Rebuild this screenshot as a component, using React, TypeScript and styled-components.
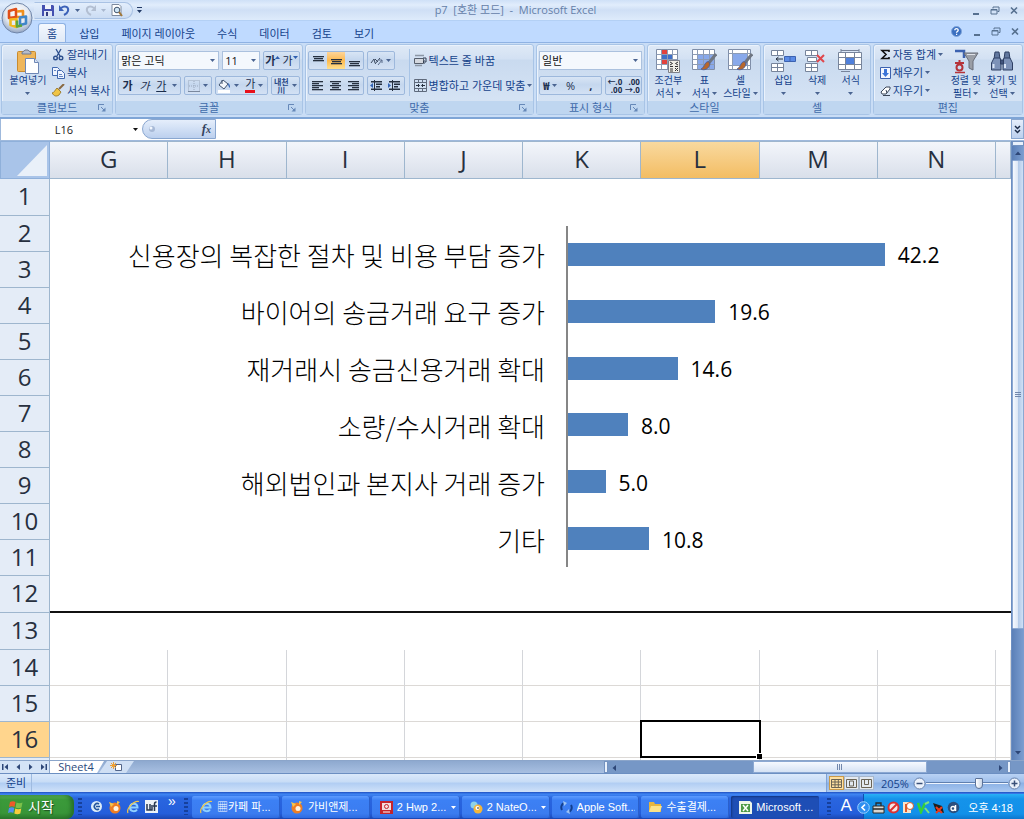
import React from 'react';
import styled, { createGlobalStyle, css } from 'styled-components';

const ui = '"Open Sans", "Noto Sans CJK KR", sans-serif';

const GlobalStyle = createGlobalStyle`
  * { box-sizing: border-box; }
  body { margin: 0; background: #bfdbff; font-family: ${ui}; font-size: 11px; color: #15428b; }
  button, input, select { font: inherit; color: inherit; border: 0; padding: 0; margin: 0; background: none; border-radius: 0; outline: none; }
  svg { display: block; flex: none; }
`;

const Window = styled.div`
  display: flex;
  flex-direction: column;
  height: 100vh;
  min-height: 500px;
  overflow: hidden;
`;

/* ---------- title bar ---------- */

const Top = styled.header`
  position: relative;
  flex: none;
`;

const TitleBar = styled.div`
  display: flex;
  align-items: center;
  gap: 4px;
  height: 21px;
  padding: 0 6px 0 34px;
  border-bottom: 1px solid #b3d0f5;
  background: linear-gradient(#cfe0f7, #e1edfc 25%, #cfdff5 50%, #deebfb);
`;

const Orb = styled.button`
  position: absolute;
  left: 1px;
  top: 2px;
  width: 32px;
  height: 32px;
`;

const QuickBar = styled.div`
  display: flex;
  align-items: center;
  gap: 5px;
  width: 99px;
  height: 17px;
  padding-left: 7px;
  border: 1px solid #a9c2e4;
  border-left-color: transparent;
  border-radius: 0 9px 9px 0;
  background: linear-gradient(#e3eefc, #cbdcf3);
`;

const IconButton = styled.button`
  display: flex;
  align-items: center;
  justify-content: center;
`;

const Title = styled.h1`
  flex: 1;
  margin: 0;
  padding-right: 82px;
  font-size: 11px;
  line-height: 20px;
  font-weight: 400;
  text-align: center;
  white-space: pre;
  color: #6580a8;
`;

const WindowButtons = styled.div`
  display: flex;
  align-items: center;
  align-self: center;
  gap: 10px;
`;

/* ---------- ribbon ---------- */

const TabRow = styled.nav`
  display: flex;
  align-items: flex-end;
  gap: 4px;
  height: 21px;
  padding: 0 5px 0 38px;
  background: #bfdaff;
`;

const Tab = styled.button<{ $active?: boolean }>`
  height: 19px;
  padding: 0 8px;
  line-height: 17px;
  white-space: nowrap;
  border: 1px solid transparent;
  border-bottom: 0;
  ${p => p.$active && css`
    border-color: #8fb2e3;
    border-radius: 3px 3px 0 0;
    background: linear-gradient(#f4f8fe, #dfe9f6);
  `}
`;

const TabSpacer = styled.div`
  flex: 1;
`;

const Ribbon = styled.div`
  display: grid;
  grid-template-columns:
    minmax(0, 112fr) minmax(0, 187fr) minmax(0, 229fr) minmax(0, 109fr)
    minmax(0, 114fr) minmax(0, 107fr) minmax(0, 150fr);
  gap: 2px;
  height: 77px;
  padding: 1px 1px 2px;
  border-top: 1px solid #8fb2e3;
  border-bottom: 2px solid #7fa5d6;
  background: #c9ddf6;
`;

const GroupBox = styled.section`
  display: flex;
  flex-direction: column;
  border: 1px solid #a8c4e6;
  border-radius: 3px;
  box-shadow: inset 1px 1px 0 #eaf2fc;
  background: linear-gradient(#dfe9f6, #d3e1f3 20%, #c9daef 22%, #d9e6f6);
`;

const GroupBody = styled.div`
  display: flex;
  flex: 1;
  min-height: 0;
  padding: 0 2px;
`;

const GroupFoot = styled.div`
  display: grid;
  grid-template-columns: 14px 1fr 14px;
  align-items: center;
  height: 13px;
  line-height: 13px;
  text-align: center;
  color: #3e6aaa;
  background: #bfd6f0;
`;

const ToolRows = styled.div`
  display: flex;
  flex-direction: column;
  gap: 6px;
  padding-top: 6px;
  width: 100%;
`;

const AlignRows = styled(ToolRows)`
  flex: none;
  width: 97px;
  margin-right: 4px;
`;

const Gap = styled.div`
  width: 7px;
`;

const ToolRow = styled.div`
  display: flex;
  gap: 3px;
  height: 19px;
`;

const ButtonStrip = styled.div<{ $grow?: number }>`
  display: flex;
  align-items: stretch;
  flex: ${p => p.$grow ?? 1} 1 0;
  min-width: 0;
  border: 1px solid #9db8dc;
  border-radius: 2px;
  background: linear-gradient(#d8e5f5, #c5d7ee 45%, #d3e1f4);
`;

const Tool = styled.button<{ $on?: boolean; $look?: 'bold' | 'italic' | 'underline' }>`
  display: flex;
  flex: 1;
  align-items: center;
  justify-content: center;
  gap: 3px;
  min-width: 0;
  line-height: 15px;
  color: #1b2d4d;
  white-space: nowrap;
  ${p => p.$on && css`background: linear-gradient(#fdd59a, #fdb94f 50%, #ffe08e);`}
  ${p => p.$look === 'bold' && css`font-weight: 700;`}
  ${p => p.$look === 'italic' && css`font-style: italic;`}
  ${p => p.$look === 'underline' && css`text-decoration: underline;`}
`;

const CaretTool = styled(Tool)`
  flex: none;
  width: 10px;
`;

const SelectShell = styled.label<{ $grow?: number }>`
  display: grid;
  flex: ${p => p.$grow ?? 1} 1 0;
  min-width: 0;
  align-items: center;
  border: 1px solid #abc1de;
  background: #f4f8fd;

  select {
    grid-area: 1 / 1;
    appearance: none;
    width: 100%;
    height: 17px;
    padding-left: 2px;
    line-height: 17px;
    color: #111;
  }
  svg {
    grid-area: 1 / 1;
    justify-self: end;
    margin-right: 3px;
    pointer-events: none;
  }
`;

const SmallList = styled.div`
  display: flex;
  flex-direction: column;
  gap: 1px;
  padding-top: 1px;
`;

const EditList = styled(SmallList)`
  width: 72px;
  padding-left: 4px;
`;

const SmallButton = styled.button`
  display: flex;
  align-items: center;
  gap: 2px;
  height: 17px;
  line-height: 16px;
  white-space: nowrap;
`;

const WideList = styled.div`
  display: flex;
  flex-direction: column;
  gap: 8px;
  margin: 4px 0 5px;
  padding: 3px 0 0 4px;
  border-left: 1px solid #a8c4e6;
`;

const BigButton = styled.button`
  display: flex;
  flex: 1;
  flex-direction: column;
  align-items: center;
  min-width: 0;
  padding-top: 3px;
  font-size: 10px;
  line-height: 13px;
  white-space: nowrap;
`;

const BigIcon = styled.span`
  display: flex;
  align-items: center;
  height: 26px;
`;

const BigLabel = styled.span`
  display: flex;
  align-items: center;
  justify-content: center;
  gap: 2px;
  height: 13px;
`;

/* ---------- formula bar ---------- */

const FormulaBar = styled.div`
  display: flex;
  height: 22px;
  flex: none;
  padding-bottom: 1px;
  border-bottom: 1px solid #9fb9dc;
  border-left: 1px solid #9fb9dc;
  background: #fff;
`;

const NameBox = styled.label`
  display: flex;
  align-items: center;
  width: 141px;
  padding-right: 4px;
  input { flex: 1; min-width: 0; padding-right: 6px; text-align: center; color: #222; }
`;

const FxPill = styled.div`
  display: flex;
  align-items: center;
  justify-content: space-between;
  width: 74px;
  padding: 0 4px 0 5px;
  border: 1px solid #8aa7d0;
  border-radius: 10px 0 0 10px;
  background: linear-gradient(#e5eefb, #bcd0ee);
`;

const FxButton = styled.button`
  font-family: "Liberation Serif", serif;
  font-size: 13px;
  font-style: italic;
  font-weight: 700;
  line-height: 14px;
  color: #34445e;
  small { font-size: 10px; }
`;

const FormulaInput = styled.input`
  flex: 1;
  min-width: 0;
  padding-left: 4px;
`;

const ExpandButton = styled.button`
  display: flex;
  align-items: center;
  justify-content: center;
  width: 13px;
  border: 1px solid #8aa7d0;
  background: linear-gradient(#e5eefb, #bcd0ee);
`;

/* ---------- sheet ---------- */

const SheetArea = styled.main`
  display: flex;
  flex: 1;
  min-height: 0;
  background: #fff;
`;

const SheetView = styled.div`
  position: relative;
  flex: 1;
  min-width: 0;
  overflow: hidden;
`;

const Grid = styled.table`
  width: 100%;
  table-layout: fixed;
  border-collapse: separate;
  border-spacing: 0;
  font-size: 24px;
  color: #27303f;
  th, td { padding: 0 0 2px; font-weight: 400; line-height: 32px; }
`;

const HeadCol = styled.col`
  width: 50px;
`;

const TailCol = styled.col`
  width: 15px;
`;

const ColHead = styled.th<{ $on?: boolean }>`
  height: 38px;
  border-right: 1px solid #9eb6ce;
  border-bottom: 1px solid #9eb6ce;
  border-top: 1px solid #9eb6ce;
  background: ${p => (p.$on ? 'linear-gradient(#f9d99f, #f3bd63)' : 'linear-gradient(#f3f6fb, #d9dfea)')};
`;

const Corner = styled.th`
  border: 1px solid #8fb0da;
  background: #a9c4e9;
  svg { margin: 2px 2px 0 auto; }
`;

const RowHead = styled.th<{ $on?: boolean }>`
  border-right: 1px solid #9eb6ce;
  border-bottom: 1px solid #9eb6ce;
  background: ${p => (p.$on ? '#ffd58d' : '#e4ecf7')};
`;

const Row = styled.tr<{ $tall?: boolean }>`
  height: ${p => (p.$tall ? 37 : 36)}px;
`;

const Cell = styled.td<{ $grid?: boolean; $rule?: boolean; $active?: boolean }>`
  ${p => p.$grid && css`
    border-right: 1px solid #d4d6da;
    border-bottom: 1px solid #dcd9d6;
  `}
  ${p => p.$rule && css`border-bottom: 2px solid #111;`}
  ${p => p.$active && css`
    position: relative;
    &::before {
      content: '';
      position: absolute;
      inset: -2px -2px -1px -1px;
      border: 2px solid #000;
    }
    &::after {
      content: '';
      position: absolute;
      right: -3px;
      bottom: -2px;
      width: 5px;
      height: 5px;
      border: 1px solid #fff;
      border-width: 1px 0 0 1px;
      background: #000;
    }
  `}
`;

/* The chart floats above the cells. */
const Chart = styled.figure`
  position: absolute;
  top: 85px;
  left: 50px;
  right: 0;
  height: 341px;
  margin: 0;
  display: grid;
  grid-template-columns: 516fr 445fr;
  grid-template-rows: repeat(6, 1fr);
`;

const ChartLabel = styled.div`
  display: flex;
  align-items: center;
  justify-content: flex-end;
  padding: 2px 21px 0 0;
  font-family: "Noto Sans CJK KR", sans-serif;
  font-size: 26px;
  font-weight: 300;
  line-height: 36px;
  white-space: nowrap;
  color: #000;
`;

const ChartTrack = styled.div`
  display: flex;
  align-items: center;
  border-left: 2px solid #868686;
`;

const Bar = styled.div`
  flex: none;
  height: 23px;
  background: #4f81bd;
`;

const BarValue = styled.span`
  padding: 2px 0 0 13px;
  font-family: "Open Sans", sans-serif;
  font-size: 21px;
  line-height: 28px;
  color: #000;
`;

const VScroll = styled.div`
  display: flex;
  flex-direction: column;
  width: 13px;
  border-left: 1px solid #6d8fc2;
  background: linear-gradient(90deg, #5b80b8, #7c9ed0);
`;

const SplitHandle = styled.div<{ $vertical?: boolean }>`
  flex: none;
  width: ${p => (p.$vertical ? '4px' : 'auto')};
  height: ${p => (p.$vertical ? 'auto' : '5px')};
  border: 1px solid #7392c0;
  background: #e9f1fc;
`;

const ScrollArrow = styled.button`
  display: flex;
  flex: none;
  align-items: center;
  justify-content: center;
  min-width: 12px;
  height: 14px;
`;

const VThumb = styled.div`
  display: flex;
  flex: 4;
  align-items: center;
  justify-content: center;
  border: 1px solid #8ba8d2;
  border-radius: 1px;
  background: linear-gradient(90deg, #f5f9ff, #dbe6f5 50%, #b4cbe9 55%, #cfe0f6);
`;

const Track = styled.div<{ $grow: number }>`
  flex: ${p => p.$grow};
`;

/* ---------- sheet tabs, status ---------- */

const SheetBar = styled.div`
  display: flex;
  flex: none;
  height: 14px;
  border-top: 1px solid #8ba5ca;
  border-bottom: 1px solid #6c8fc2;
  background: linear-gradient(#8ea9cf, #a8c0e2);
`;

const SheetNav = styled.div`
  display: flex;
  align-items: center;
  justify-content: space-around;
  width: 50px;
  border-right: 1px solid #8ba5ca;
  background: #d4e3f6;
`;

const SheetTab = styled.button`
  width: 54px;
  padding-right: 2px;
  line-height: 12px;
  color: #2a4a7c;
  background: #fff;
  clip-path: polygon(0 0, 100% 0, calc(100% - 7px) 100%, 0 100%);
`;

const NewSheetTab = styled.button`
  display: flex;
  align-items: center;
  justify-content: center;
  width: 35px;
  margin-left: -5px;
  background: #cfdff4;
  clip-path: polygon(8px 0, 100% 0, calc(100% - 8px) 100%, 0 100%);
`;

const HScroll = styled.div`
  display: flex;
  width: 39%;
  background: #7697c6;
`;

const HThumb = styled.div`
  display: flex;
  flex: 171;
  align-items: center;
  justify-content: center;
  border: 1px solid #8ba8d2;
  background: linear-gradient(#f5f9ff, #d5e2f4);
`;

const BarEnd = styled.div`
  width: 13px;
  background: #7697c6;
`;

const Status = styled.footer`
  display: flex;
  flex: none;
  align-items: stretch;
  height: 18px;
  line-height: 17px;
  background: linear-gradient(#dbe9fb, #c7dcf6 45%, #b0cdf3 50%, #d0e2f9);
  > span { width: 32px; padding-left: 6px; border-right: 1px solid #9fbbe0; }
`;

const ViewTools = styled.div`
  display: flex;
  align-items: center;
  width: 198px;
  margin-left: auto;
  padding: 0 3px 0 2px;
  border-left: 1px solid #7fa2d4;
  background: linear-gradient(#b9d2f4, #9fbfeb 45%, #8ab0e4 50%, #a9c8f1);
  output { flex: none; width: 39px; padding-left: 7px; }
`;

const ViewButton = styled.button<{ $on?: boolean }>`
  display: flex;
  align-items: center;
  justify-content: center;
  width: 15px;
  height: 14px;
  border: 1px solid ${p => (p.$on ? '#c99a4a' : '#a8b8cc')};
  background: ${p => (p.$on ? '#ffe0a0' : '#e3e9f0')};
`;

const ZoomRange = styled.input`
  flex: 1;
  min-width: 0;
  height: 14px;
  appearance: none;
  background: linear-gradient(transparent 6px, #5f7fae 6px, #5f7fae 7px, #eef5ff 7px, #eef5ff 8px, transparent 8px);
  &::-webkit-slider-thumb {
    appearance: none;
    width: 8px;
    height: 11px;
    border: 1px solid #5b7299;
    border-radius: 1px 1px 4px 4px;
    background: linear-gradient(90deg, #fff, #c9d6e8);
  }
`;

/* ---------- taskbar ---------- */

const TaskBar = styled.nav`
  display: flex;
  flex: none;
  align-items: stretch;
  height: 27px;
  font-family: "Liberation Sans", "Noto Sans CJK KR", sans-serif;
  color: #fff;
  background: linear-gradient(#1f4fc0, #3f86f3 8%, #2a66df 22%, #245edb 80%, #1b46b0);
`;

const Start = styled.button`
  display: flex;
  align-items: center;
  gap: 5px;
  width: 74px;
  margin-top: 3px;
  padding-left: 8px;
  border-radius: 0 8px 8px 0;
  font-size: 14px;
  line-height: 20px;
  white-space: nowrap;
  color: #fff;
  text-shadow: 1px 1px 1px #1c4d1c;
  background: linear-gradient(#5fb45c, #3b9a3a 20%, #389538 75%, #2b7a2c);
  box-shadow: inset -3px 0 4px #276f28;
`;

const Grip = styled.div`
  width: 4px;
  margin: 6px 4px 4px;
  background: repeating-linear-gradient(#16409c 0 2px, transparent 2px 4px);
`;

const QuickLaunch = styled.div`
  display: flex;
  align-items: center;
  gap: 5px;
  padding: 2px 4px 0;
`;

const More = styled.span`
  align-self: flex-start;
  width: 18px;
  padding: 2px 0 0 6px;
  font-size: 14px;
  line-height: 14px;
`;

const Tasks = styled.div`
  display: flex;
  flex: 1;
  gap: 2px;
  min-width: 0;
  padding: 4px 4px 1px 0;
`;

const Task = styled.button<{ $on?: boolean }>`
  display: flex;
  flex: 1 1 0;
  align-items: center;
  gap: 4px;
  min-width: 0;
  padding: 0 4px 0 8px;
  border-radius: 2px;
  line-height: 20px;
  text-align: left;
  white-space: nowrap;
  color: #fff;
  background: ${p => (p.$on ? '#1e4eb5' : 'linear-gradient(#5c9bff, #3c80f4 20%, #3b7cf0 80%, #2f6be0)')};
  box-shadow: ${p => (p.$on ? 'inset 1px 1px 2px #14357f' : 'inset -1px 0 0 #2a60cc')};
  span { flex: 1; overflow: hidden; }
`;

const Ime = styled.button`
  width: 28px;
  padding-right: 6px;
  font-size: 17px;
  line-height: 24px;
  text-align: center;
  color: #fff;
`;

const Tray = styled.div`
  display: flex;
  align-items: center;
  gap: 2px;
  padding: 2px 11px 0 0;
  margin-top: 2px;
  border-left: 1px solid #0f4fb0;
  background: linear-gradient(#28b0f6, #1593ea 20%, #1290e9 80%, #0d76cc);
  time { margin-left: 6px; line-height: 20px; white-space: nowrap; }
`;

const TrayToggle = styled.button`
  display: flex;
  margin-left: -7px;
`;

/* ---------- icons ---------- */

const Caret = ({ color = '#4a6491' }: { color?: string }) => (
  <svg width="5" height="3" viewBox="0 0 5 3"><path d="M0 0h5L2.500 3z" fill={color} /></svg>
);

const Launcher = () => (
  <svg width="8" height="8" viewBox="0 0 8 8" fill="none" stroke="#6688b8"><path d="M.5 6V.5H6M3 3l3 3" /><path d="M7.500 3.500v4h-4z" fill="#6688b8" stroke="none" /></svg>
);

const OfficeOrb = () => (
  <svg width="32" height="32" viewBox="0 0 32 32">
    <defs>
      <radialGradient id="orb" cx=".5" cy=".35" r=".65">
        <stop offset="0" stopColor="#fff" /><stop offset=".6" stopColor="#e3e8f0" /><stop offset="1" stopColor="#93a5c2" />
      </radialGradient>
    </defs>
    <circle cx="16" cy="16" r="15" fill="url(#orb)" stroke="#7086aa" />
    <g fill="none" strokeWidth="2.600" strokeLinejoin="round">
      <path d="M8 9l7-2v8l-7 1z" stroke="#df4f1a" />
      <path d="M16 9.500l6-.5v6h-6" stroke="#f0901c" />
      <path d="M9.500 17.500l6-.5v8l-6-2z" stroke="#f2b81f" />
      <path d="M19 15.500l6-1v7l-6 1.500z" stroke="#3f86c9" />
      <path d="M16 18.500v6l5-1" stroke="#5da53a" />
    </g>
  </svg>
);

const SaveIcon = () => (
  <svg width="12" height="12" viewBox="0 0 12 12"><path d="M0 1h11l1 1v10H0z" fill="#4450b0" /><path d="M3 1h6v4H3z" fill="#f1f4fb" /><path d="M2 7h8v5H2z" fill="#dfe6f5" /><path d="M4 8h2v4H4z" fill="#333c80" /></svg>
);
const UndoIcon = ({ flip, color }: { flip?: boolean; color: string }) => (
  <svg width="11" height="12" viewBox="0 0 11 12" fill="none" stroke={color} strokeWidth="2"><g transform={flip ? 'translate(11 0) scale(-1 1)' : undefined}><path d="M2 4c4-3 8-1 7 3-.5 2-2 3-4 4" /><path d="M0 1v6h5z" fill={color} stroke="none" /></g></svg>
);
const PreviewIcon = () => (
  <svg width="12" height="13" viewBox="0 0 12 13"><path d="M1 .5h7l2 2v9H1z" fill="#fff" stroke="#7d8a9e" /><circle cx="6" cy="6" r="2.800" fill="#cfe6f5" stroke="#42546e" /><path d="M8 8l3 4" stroke="#a3793a" strokeWidth="2" /></svg>
);
const CustomizeIcon = () => (
  <svg width="5" height="7" viewBox="0 0 5 7" fill="#223a66"><path d="M0 0h5v1H0zM0 3h5L2.500 6z" /></svg>
);

const MinIcon = () => <svg width="9" height="9" viewBox="0 0 9 9"><path d="M2 7h6v2H2z" fill="#56708f" /></svg>;
const RestoreIcon = () => <svg width="10" height="9" viewBox="0 0 10 9" fill="none" stroke="#56708f"><path d="M3 2.500V1h6v4.500H7.500M1 3.500h6V8H1zM1 4h6" /></svg>;
const CloseIcon = () => <svg width="8" height="9" viewBox="0 0 8 9"><path d="M1 1.500l6 6M7 1.500l-6 6" stroke="#56708f" strokeWidth="1.600" /></svg>;
const HelpIcon = () => (
  <svg width="11" height="11" viewBox="0 0 11 11"><circle cx="5.500" cy="5.500" r="5" fill="#3a6fc0" stroke="#7fa3d8" /><path d="M3.800 4.200c0-2 3.400-2 3.400 0 0 1.300-1.700 1.200-1.700 2.500" fill="none" stroke="#fff" strokeWidth="1.300" /><path d="M5 7.700h1.200v1.200H5z" fill="#fff" /></svg>
);

const PasteIcon = () => (
  <svg width="22" height="25" viewBox="0 0 22 25"><rect x=".5" y="2.500" width="18" height="20" rx="1" fill="#efb65a" stroke="#c98b2e" /><path d="M5 4c0-2 2-1 3-3h3c1 2 3 1 3 3v1H5z" fill="#b5bccb" stroke="#6f7a90" /><path d="M8.500 9.500h9l4 4v11h-13z" fill="#fff" stroke="#6e87b5" /><path d="M17.500 9.500v4h4" fill="#d7e2f4" stroke="#6e87b5" /></svg>
);
const CutIcon = () => (
  <svg width="13" height="13" viewBox="0 0 13 13" fill="none" stroke="#2d4f8d"><path d="M4 1l4 7M9 1L5 8" strokeWidth="1.300" /><circle cx="3.500" cy="10" r="1.800" strokeWidth="1.400" /><circle cx="9" cy="10" r="1.800" strokeWidth="1.400" /></svg>
);
const CopyIcon = () => (
  <svg width="13" height="13" viewBox="0 0 13 13" fill="#eef4ff" stroke="#4169b0"><path d="M.5 1.500h5l2 2v6h-7z" /><path d="M5.500 4.500h4l3 3v5h-7z" /><path d="M7 8.500h3M7 10.500h4M2 4.500h2" strokeWidth=".8" /></svg>
);
const BrushIcon = () => (
  <svg width="13" height="13" viewBox="0 0 13 13"><path d="M12 0L7 5" stroke="#8a6a42" strokeWidth="2" /><path d="M5 4l4 4-2 3c-3 2-5 1-7-2 2 0 3-3 5-5z" fill="#f0c445" stroke="#8f6d1d" strokeWidth=".8" /></svg>
);

const lineSets: Record<string, [number, number, number][]> = {
  top: [[1, 1, 11], [2, 3, 9], [1, 5, 11]],
  middle: [[1, 4, 11], [2, 6, 9], [1, 8, 11]],
  bottom: [[1, 6, 11], [2, 8, 9], [1, 10, 11]],
  left: [[0, 1, 11], [0, 3, 7], [0, 5, 11], [0, 7, 7], [0, 9, 11]],
  center: [[0, 1, 11], [2, 3, 7], [0, 5, 11], [2, 7, 7], [0, 9, 11]],
  right: [[0, 1, 11], [4, 3, 7], [0, 5, 11], [4, 7, 7], [0, 9, 11]],
};
const LinesIcon = ({ kind }: { kind: string }) => (
  <svg width="12" height="12" viewBox="0 0 12 12" fill="#26303f">
    {lineSets[kind].map(([x, y, w]) => <rect key={y} x={x} y={y} width={w} height="1.300" />)}
  </svg>
);
const IndentIcon = ({ out }: { out?: boolean }) => (
  <svg width="13" height="12" viewBox="0 0 13 12" fill="#26303f"><path d="M1 1h11v1.400H1zM6 3.500h6v1.400H6zM6 6h4v1.400H6zM1 8.500h11v1.400H1zM4 0h1v11H4z" /><path d={out ? 'M0 5.500L3 3v5z' : 'M3 5.500L0 3v5z'} fill="#3565b5" /></svg>
);
const OrientIcon = () => (
  <svg width="13" height="12" viewBox="0 0 13 12" fill="none" stroke="#3c4a60"><path d="M1 8l3-4 1 4M5 9l5-6M5 4l3 3" /><path d="M8 10l4-5M9 5h3v3" stroke="#5c6f8e" /></svg>
);
const WrapIcon = () => (
  <svg width="13" height="14" viewBox="0 0 13 14" fill="none"><path d="M1 1.500h9M1 11.500h7" stroke="#8c96a5" strokeWidth="1.500" /><path d="M.5 4.500h9v5h-9z" fill="#d4d8df" stroke="#555e6c" /><path d="M9 4h3v4H9l1.500-1.500M9 8l1.500 1.500" stroke="#333f52" /></svg>
);
const MergeIcon = () => (
  <svg width="13" height="13" viewBox="0 0 13 13" fill="none"><path d="M.5.500h12v12H.5zM.5 3.500h12M.5 9.500h12M4.500.500v3M8.500.500v3M4.500 9.500v3M8.500 9.500v3" stroke="#5f6a7c" /><path d="M2 6.500h3M11 6.500H8M4 5l1.500 1.500L4 8M9 5L7.500 6.500 9 8" stroke="#26303f" /></svg>
);
const BorderIcon = () => (
  <svg width="12" height="12" viewBox="0 0 12 12" fill="none" stroke="#9aa8bd"><path d="M.5.500h11v11H.5zM6 1v10M1 6h10" strokeDasharray="1 1" /><path d="M0 11.500h12" stroke="#7a889e" /></svg>
);
const FillIcon = () => (
  <svg width="13" height="14" viewBox="0 0 13 14"><path d="M5 1l5 4-4 5-5-4z" fill="#f4f7fb" stroke="#41536f" /><path d="M4 1v4" stroke="#41536f" /><path d="M10 4c2 1 2 3 2 5-1-1-2-2-2-5z" fill="#3565b5" /><path d="M0 11h12v3H0z" fill="#fff" /></svg>
);
const FontColor = styled.span`
  height: 15px;
  line-height: 12px;
  border-bottom: 3px solid #e8101a;
`;
const Phonetic = styled.span`
  font-size: 8px;
  line-height: 8px;
  font-weight: 700;
  white-space: pre;
  text-align: center;
  color: #2b4a86;
`;
const SizeMark = ({ up }: { up?: boolean }) => (
  <svg width="5" height="9" viewBox="0 0 5 9"><path d={up ? 'M0 3h5L2.500 0z' : 'M0 0h5L2.500 3z'} fill="#2f5fb0" /></svg>
);
const SizeTool = styled(Tool)`
  gap: 0;
`;
const Decimals = styled.span`
  font-size: 8px;
  line-height: 8px;
  font-weight: 700;
  white-space: pre;
  text-align: right;
`;

const CondIcon = () => (
  <svg width="25" height="24" viewBox="0 0 25 24"><path d="M.5.500h21v20H.5z" fill="#fff" stroke="#7f8ea8" /><path d="M6 1h6v5H6zM6 11h6v5H6z" fill="#e2423c" /><path d="M6 6h10v5H6z" fill="#3f6fc8" /><path d="M.5 5.500h21M.5 10.500h21M.5 15.500h21M5.500.500v20M11.500.500v20M16.500.500v20" stroke="#8d9cb5" fill="none" /><path d="M12.500 11.500h11v12h-11z" fill="#f1efe8" stroke="#7d8088" /><path d="M14 13l2.500 1.500-2.500 1.500M14 17.500h3M22 13l-2.500 1.500 2.500 1.500M19 17.500h3M14 20h3M14 22h3M19 19l3 3M22 19l-3 3" stroke="#333" fill="none" /></svg>
);
const TableIcon = ({ plain }: { plain?: boolean }) => (
  <svg width="25" height="24" viewBox="0 0 25 24"><path d="M.5.500h22v20H.5z" fill="#fff" stroke="#7f8ea8" /><path d={plain ? 'M5 5h14v11H5z' : 'M6 6h16v14H6z'} fill="#89a9ea" /><path d={plain ? 'M.5 4.500h22M4.500.500v20M19.500.500v20M.5 16.500h22' : 'M.5 5.500h22M.5 10.500h22M.5 15.500h22M5.500.500v20M11.500.500v20M17.500.500v20'} stroke="#8d9cb5" fill="none" /><path d="M24 5l-8 10" stroke="#6f7682" strokeWidth="3" /><path d="M17 13c-1-1-3 0-4 2s-2 4-4 5c3 2 8 0 9-5z" fill="#b7672c" stroke="#3f5ea8" strokeWidth=".8" /></svg>
);
const CellsIcon = ({ kind }: { kind: 'insert' | 'delete' | 'format' }) => (
  <svg width="25" height="24" viewBox="0 0 25 24" stroke="#77849b">
    {kind === 'format' ? (
      <>
        <path d="M.5 3.500h23v17H.5z" fill="#fff" /><path d="M8 8h8v8H8z" fill="#4f80dc" stroke="none" /><path d="M.5 8.500h23M.5 15.500h23M7.500 3.500v17M16.500 3.500v17M3 0v3M3 1.500h18M21 0v3M3 22.500h9" fill="none" />
      </>
    ) : (
      <>
        <path d="M.5 1.500h12v5H.5zM6.500 1.500v5M.5 14.500h12v8H.5zM6.500 14.500v8M.5 18.500h12" fill="#fff" />
        {kind === 'insert'
          ? <><path d="M13.500 7.500h11v5h-11zM19 7.500v5" fill="#5b8be6" stroke="#3c62b0" /><path d="M5 10h7M7.500 8L5 10l2.500 2" fill="none" stroke="#26303f" /></>
          : <><path d="M2.500 8.500h9v4h-9z" fill="#fff" /><path d="M12 6l7 7M19 6l-7 7" stroke="#e0474c" strokeWidth="2" /></>}
      </>
    )}
  </svg>
);
const SigmaIcon = () => <svg width="11" height="11" viewBox="0 0 11 11"><path d="M9 3V1.500H2L6 5.500 2 9.500h7V8" fill="none" stroke="#111" strokeWidth="1.600" /></svg>;
const FillDownIcon = () => <svg width="11" height="12" viewBox="0 0 11 12"><path d="M.5.500h10v11H.5z" fill="#f3f7ff" stroke="#3c62b0" /><path d="M4 2h3v4h2L5.500 10 2 6h2z" fill="#3b74d8" /></svg>;
const EraserIcon = () => <svg width="11" height="11" viewBox="0 0 11 11"><path d="M1 7l5-5h4v2L6 9H2z" fill="#fff" stroke="#3b4658" /><path d="M3 10.500h7M6 5l1 3" stroke="#3b4658" fill="none" /></svg>;
const SortIcon = () => (
  <svg width="26" height="25" viewBox="0 0 26 25" fill="none"><path d="M2 2h9v7" stroke="#3c62b0" strokeWidth="2.500" /><path d="M2 14h9M6.500 11v3" stroke="#b5333a" strokeWidth="2" /><circle cx="6.500" cy="18.500" r="3" stroke="#b5333a" strokeWidth="2" /><path d="M2 23.500h10" stroke="#b5333a" strokeWidth="1.500" /><path d="M11 4h14l-5 8v9l-4-2v-7z" fill="#9a9ea6" stroke="#686d78" /><path d="M14 5.500h8" stroke="#dfe2e8" /></svg>
);
const FindIcon = () => (
  <svg width="22" height="24" viewBox="0 0 22 24" stroke="#2f4064"><path d="M4 3h4l1 7H3zM14 3h4l1 7h-6z" fill="#62789f" /><path d="M3 9h6l1 3v9H.5v-7zM13 9h6l2.500 5v7H12v-9z" fill="#7d92b8" /><path d="M9.500 11h3v4h-3z" fill="#41547c" /><path d="M2.500 15v4M14 15v4" stroke="#dbe6f7" strokeWidth="2" /></svg>
);

const Arrow = ({ dir, bar }: { dir: 'l' | 'r' | 'u' | 'd'; bar?: boolean }) => (
  <svg width="8" height="8" viewBox="0 0 8 8" fill="#2d4677">
    <g transform={`rotate(${{ l: 0, u: 90, r: 180, d: 270 }[dir]} 4 4)`}><path d="M6 1v6L2.500 4z" />{bar && <path d="M0 1h1.500v6H0z" />}</g>
  </svg>
);
const NewSheetIcon = () => <svg width="13" height="11" viewBox="0 0 13 11"><path d="M5.500 2.500h6v6h-6z" fill="#fff" stroke="#52658a" /><path d="M3.500 0v7M0 3.500h7M1 1l5 5M6 1L1 6" stroke="#f0a030" /></svg>;
const DoubleDown = () => <svg width="7" height="9" viewBox="0 0 7 9" fill="none" stroke="#1c2b47" strokeWidth="1.500"><path d="M1 1l2.500 2.500L6 1M1 5l2.500 2.500L6 5" /></svg>;
const GripLines = ({ flat }: { flat?: boolean }) => <svg width="6" height="6" viewBox="0 0 6 6" stroke="#7288ad"><path d={flat ? 'M0 .5h6M0 2.500h6M0 4.500h6' : 'M.5 0v6M2.500 0v6M4.500 0v6'} /></svg>;

const ViewIcon = ({ kind }: { kind: number }) => (
  <svg width="11" height="9" viewBox="0 0 11 9" fill="none" stroke="#6b6455">
    <path d={['M.5.500h10v8H.5zM.5 3h10M.5 5.800h10M4 .5v8M7.300.500v8', 'M.5.500h10v8H.5zM3.500 2h4v5h-4z', 'M.5.500h10v8H.5zM3.500.500v5h4v-5'][kind]} />
  </svg>
);
const RoundIcon = ({ plus }: { plus?: boolean }) => (
  <svg width="13" height="13" viewBox="0 0 13 13"><circle cx="6.500" cy="6.500" r="5.500" fill="#eaf1fb" stroke="#6580ab" /><path d={plus ? 'M3.500 6.500h6M6.500 3.500v6' : 'M3.500 6.500h6'} stroke="#3a5078" strokeWidth="1.500" /></svg>
);

const FlagIcon = () => (
  <svg width="15" height="15" viewBox="0 0 15 15"><path d="M2 2c2-1 4-1 5.500 0L6.500 7C5 6 3 6 1 7z" fill="#ee5a2a" /><path d="M8.500 2.500c2 1 4 1 6 0l-1 5c-2 1-4 1-6 0z" fill="#7cc04a" /><path d="M1 8c2-1 4-1 5.300 0l-1 5C4 12 2 12 0 13z" fill="#4f8ff0" /><path d="M7.300 8.500c2 1 4 1 6 0l-1 5c-2 1-4 1-6 0z" fill="#f6cd3c" /></svg>
);
const IeIcon = () => (
  <svg width="13" height="14" viewBox="0 0 13 14" fill="none"><path d="M3 7.500h7.500C10.500 2.500 3 2.500 3 7.500c0 4.500 5.500 4.500 7 2" stroke="#8fd0ff" strokeWidth="2" /><path d="M1 13C-1 9 7 0 12 1.500" stroke="#f0c64a" strokeWidth="1.200" /></svg>
);
const MailIcon = () => (
  <svg width="13" height="13" viewBox="0 0 13 13"><circle cx="6.500" cy="6.500" r="5.500" fill="#dcecf9" /><path d="M9 4a3 3 0 1 0 0 5M6 6.500h4" stroke="#24559e" strokeWidth="1.600" fill="none" /></svg>
);
const OrangeIcon = () => (
  <svg width="14" height="14" viewBox="0 0 14 14"><circle cx="7" cy="8" r="5.500" fill="#ee7e24" /><circle cx="8" cy="8.500" r="2.500" fill="#fff3df" /><path d="M1 2l5 2-3 3zM9 1l3 1-3 3z" fill="#f6c54b" /></svg>
);
const WfIcon = () => (
  <svg width="13" height="13" viewBox="0 0 13 13"><path d="M0 0h13v13H0z" fill="#eef3f8" /><path d="M2 4v6h3V4M5 10h2V5M9.500 11V4c0-1 .5-2 2-2M8 6h4" fill="none" stroke="#28374f" strokeWidth="1.500" /></svg>
);
const HwpIcon = () => (
  <svg width="13" height="13" viewBox="0 0 13 13"><path d="M0 0h13v13H0z" fill="#c5242c" /><path d="M2 2h9v7H2z" fill="#f3dcdc" /><circle cx="6.500" cy="5.500" r="2" fill="none" stroke="#c5242c" /><path d="M3 11h7" stroke="#fff" /></svg>
);
const NateIcon = () => (
  <svg width="13" height="13" viewBox="0 0 13 13"><circle cx="4" cy="4" r="3.500" fill="#8ed1e8" /><circle cx="8" cy="8" r="4.500" fill="#f5b63a" /><circle cx="7.500" cy="7" r="2" fill="#fff" /><path d="M7 7h2" stroke="#333" /></svg>
);
const SyncIcon = () => (
  <svg width="13" height="13" viewBox="0 0 13 13" fill="none" stroke="#123f8e" strokeWidth="2"><path d="M2 9A5 5 0 0 1 4 2M11 4a5 5 0 0 1-2 7" /><path d="M3 0l4 2-3 3zM10 13l-4-2 3-3z" fill="#9cc3f5" stroke="none" /></svg>
);
const FolderIcon = () => (
  <svg width="13" height="12" viewBox="0 0 13 12"><path d="M0 1h5l1 2h6v8H0z" fill="#e5b53f" /><path d="M2 5h11l-2 6H0z" fill="#fbe28a" /></svg>
);
const ExcelIcon = () => (
  <svg width="13" height="13" viewBox="0 0 13 13"><path d="M0 0h11l2 2v11H0z" fill="#eef6ea" /><path d="M2 3h9v8H2z" fill="#4d9a46" /><path d="M4 4l5 6M9 4l-5 6" stroke="#fff" strokeWidth="1.500" /></svg>
);
const BackIcon = () => (
  <svg width="13" height="13" viewBox="0 0 13 13"><circle cx="6.500" cy="6.500" r="5.800" fill="#2f8ff0" stroke="#9ad0ff" /><path d="M8 3.500l-3 3 3 3" fill="none" stroke="#fff" strokeWidth="1.700" /></svg>
);
const TrayIcon = ({ kind }: { kind: string }) => (
  <svg width="13" height="13" viewBox="0 0 13 13" fill="none">
    {kind === 'case' && <><path d="M1 5h11v7H1z" fill="#d8d6cf" stroke="#2a2a2a" /><path d="M4 5V2h5v3M1 8h11" stroke="#2a2a2a" strokeWidth="1.300" /></>}
    {kind === 'block' && <><circle cx="6.500" cy="6.500" r="5" fill="#f6e6e4" stroke="#dc3030" strokeWidth="2" /><path d="M3 10l7-7" stroke="#dc3030" strokeWidth="2" /></>}
    {kind === 'note' && <><path d="M1 1h8v11H1z" fill="#fbe3c9" /><circle cx="8" cy="5" r="3.500" fill="#fff" stroke="#d55a2a" /><path d="M4 3v8" stroke="#e05a2a" strokeWidth="2" /></>}
    {kind === 'v' && <><path d="M1 2l3 9 4-9" stroke="#35d03a" strokeWidth="2.500" /><path d="M8 3l4-2M8 7l4 5" stroke="#7be37d" strokeWidth="2" /></>}
    {kind === 'x' && <><path d="M1 2l9 3 2 7-8-2z" fill="#1f1f1f" /><path d="M4 6l6 6M10 6l-6 6" stroke="#ee3b1e" strokeWidth="2" /></>}
    {kind === 'a' && <><circle cx="6.500" cy="6.500" r="5.800" fill="#2b4f7e" /><circle cx="6" cy="7.500" r="2" stroke="#fff" strokeWidth="1.300" /><path d="M8.500 4v6" stroke="#fff" strokeWidth="1.500" /></>}
  </svg>
);

/* ---------- data ---------- */

const columns = ['G', 'H', 'I', 'J', 'K', 'L', 'M', 'N'];
const rows = Array.from({ length: 17 }, (_, i) => i + 1);
const tallRows = [1, 12, 13];

const AXIS_MAX = 59;
const chartData = [
  { label: '신용장의 복잡한 절차 및 비용 부담 증가', value: 42.2 },
  { label: '바이어의 송금거래 요구 증가', value: 19.6 },
  { label: '재거래시 송금신용거래 확대', value: 14.6 },
  { label: '소량/수시거래 확대', value: 8 },
  { label: '해외법인과 본지사 거래 증가', value: 5 },
  { label: '기타', value: 10.8 },
];

const tasks = [
  { icon: <IeIcon />, text: '▦카페 파...' },
  { icon: <OrangeIcon />, text: '가비앤제...' },
  { icon: <HwpIcon />, text: '2 Hwp 2...', stack: true },
  { icon: <NateIcon />, text: '2 NateO...', stack: true },
  { icon: <SyncIcon />, text: 'Apple Soft...' },
  { icon: <FolderIcon />, text: '수출결제...' },
  { icon: <ExcelIcon />, text: 'Microsoft ...', on: true },
];

/* ---------- composed parts ---------- */

const Group = ({ name, launcher, children }: { name: string; launcher?: boolean; children: React.ReactNode }) => (
  <GroupBox aria-label={name}>
    <GroupBody>{children}</GroupBody>
    <GroupFoot><i /><span>{name}</span>{launcher && <Launcher />}</GroupFoot>
  </GroupBox>
);

const Big = ({ icon, top, bottom }: { icon: React.ReactNode; top: string; bottom?: string }) => (
  <BigButton>
    <BigIcon>{icon}</BigIcon>
    <BigLabel>{top}</BigLabel>
    <BigLabel>{bottom}<Caret /></BigLabel>
  </BigButton>
);

const Choice = ({ name, value, grow }: { name: string; value: string; grow?: number }) => (
  <SelectShell $grow={grow}>
    <select aria-label={name} defaultValue={value}><option>{value}</option></select>
    <Caret />
  </SelectShell>
);

const Controls = ({ help }: { help?: boolean }) => (
  <WindowButtons>
    {help && <IconButton aria-label="도움말"><HelpIcon /></IconButton>}
    <IconButton aria-label="최소화"><MinIcon /></IconButton>
    <IconButton aria-label="이전 크기로"><RestoreIcon /></IconButton>
    <IconButton aria-label="닫기"><CloseIcon /></IconButton>
  </WindowButtons>
);

export default function App() {
  return (
    <Window>
      <GlobalStyle />
      <Top>
        <TitleBar>
          <QuickBar>
            <IconButton aria-label="저장"><SaveIcon /></IconButton>
            <IconButton aria-label="실행 취소"><UndoIcon color="#3c62b8" /></IconButton>
            <Caret />
            <IconButton aria-label="다시 실행"><UndoIcon flip color="#b3bfd2" /></IconButton>
            <Caret color="#a9b8cf" />
            <IconButton aria-label="인쇄 미리 보기"><PreviewIcon /></IconButton>
          </QuickBar>
          <IconButton aria-label="빠른 실행 도구 모음 사용자 지정"><CustomizeIcon /></IconButton>
          <Title>{'p7  [호환 모드]  -  Microsoft Excel'}</Title>
          <Controls />
        </TitleBar>
        <TabRow>
          <Tab $active>홈</Tab>
          <Tab>삽입</Tab>
          <Tab>페이지 레이아웃</Tab>
          <Tab>수식</Tab>
          <Tab>데이터</Tab>
          <Tab>검토</Tab>
          <Tab>보기</Tab>
          <TabSpacer />
          <Controls help />
        </TabRow>
        <Orb aria-label="Office 단추"><OfficeOrb /></Orb>
      </Top>

      <Ribbon>
        <Group name="클립보드" launcher>
          <Big icon={<PasteIcon />} top="붙여넣기" />
          <SmallList>
            <SmallButton><CutIcon />잘라내기</SmallButton>
            <SmallButton><CopyIcon />복사</SmallButton>
            <SmallButton><BrushIcon />서식 복사</SmallButton>
          </SmallList>
        </Group>

        <Group name="글꼴" launcher>
          <ToolRows>
            <ToolRow>
              <Choice name="글꼴" value="맑은 고딕" grow={104} />
              <Choice name="글꼴 크기" value="11" grow={38} />
              <ButtonStrip $grow={36}>
                <SizeTool $look="bold">가<SizeMark up /></SizeTool>
                <SizeTool>가<SizeMark /></SizeTool>
              </ButtonStrip>
            </ToolRow>
            <ToolRow>
              <ButtonStrip $grow={64}>
                <Tool $look="bold">가</Tool>
                <Tool $look="italic">가</Tool>
                <Tool $look="underline">가</Tool>
                <CaretTool aria-label="밑줄 종류"><Caret /></CaretTool>
              </ButtonStrip>
              <ButtonStrip $grow={28}><Tool aria-label="테두리"><BorderIcon /><Caret /></Tool></ButtonStrip>
              <ButtonStrip $grow={54}>
                <Tool aria-label="채우기 색"><FillIcon /><Caret /></Tool>
                <Tool><FontColor>가</FontColor><Caret /></Tool>
              </ButtonStrip>
              <ButtonStrip $grow={28}><Tool><Phonetic>{'내천\n川'}</Phonetic><Caret /></Tool></ButtonStrip>
            </ToolRow>
          </ToolRows>
        </Group>

        <Group name="맞춤" launcher>
          <AlignRows>
            <ToolRow>
              <ButtonStrip $grow={56}>
                <Tool aria-label="위쪽 맞춤"><LinesIcon kind="top" /></Tool>
                <Tool aria-label="가운데 맞춤" $on><LinesIcon kind="middle" /></Tool>
                <Tool aria-label="아래쪽 맞춤"><LinesIcon kind="bottom" /></Tool>
              </ButtonStrip>
              <ButtonStrip $grow={26}><Tool aria-label="방향"><OrientIcon /><Caret /></Tool></ButtonStrip>
              <Gap />
            </ToolRow>
            <ToolRow>
              <ButtonStrip $grow={56}>
                <Tool aria-label="텍스트 왼쪽 맞춤"><LinesIcon kind="left" /></Tool>
                <Tool aria-label="텍스트 가운데 맞춤"><LinesIcon kind="center" /></Tool>
                <Tool aria-label="텍스트 오른쪽 맞춤"><LinesIcon kind="right" /></Tool>
              </ButtonStrip>
              <ButtonStrip $grow={37}>
                <Tool aria-label="내어쓰기"><IndentIcon out /></Tool>
                <Tool aria-label="들여쓰기"><IndentIcon /></Tool>
              </ButtonStrip>
            </ToolRow>
          </AlignRows>
          <WideList>
            <SmallButton><WrapIcon />텍스트 줄 바꿈</SmallButton>
            <SmallButton><MergeIcon />병합하고 가운데 맞춤<Caret /></SmallButton>
          </WideList>
        </Group>

        <Group name="표시 형식" launcher>
          <ToolRows>
            <ToolRow><Choice name="표시 형식" value="일반" /></ToolRow>
            <ToolRow>
              <ButtonStrip $grow={64}>
                <Tool $look="bold">₩<Caret /></Tool>
                <Tool>%</Tool>
                <Tool $look="bold">,</Tool>
              </ButtonStrip>
              <ButtonStrip $grow={37}>
                <Tool><Decimals>{'←.0\n.00'}</Decimals></Tool>
                <Tool><Decimals>{'.00\n→.0'}</Decimals></Tool>
              </ButtonStrip>
            </ToolRow>
          </ToolRows>
        </Group>

        <Group name="스타일">
          <Big icon={<CondIcon />} top="조건부" bottom="서식" />
          <Big icon={<TableIcon />} top="표" bottom="서식" />
          <Big icon={<TableIcon plain />} top="셀" bottom="스타일" />
        </Group>

        <Group name="셀">
          <Big icon={<CellsIcon kind="insert" />} top="삽입" />
          <Big icon={<CellsIcon kind="delete" />} top="삭제" />
          <Big icon={<CellsIcon kind="format" />} top="서식" />
        </Group>

        <Group name="편집">
          <EditList>
            <SmallButton><SigmaIcon />자동 합계<Caret /></SmallButton>
            <SmallButton><FillDownIcon />채우기<Caret /></SmallButton>
            <SmallButton><EraserIcon />지우기<Caret /></SmallButton>
          </EditList>
          <Big icon={<SortIcon />} top="정렬 및" bottom="필터" />
          <Big icon={<FindIcon />} top="찾기 및" bottom="선택" />
        </Group>
      </Ribbon>

      <FormulaBar>
        <NameBox><input aria-label="이름 상자" defaultValue="L16" /><Caret color="#111" /></NameBox>
        <FxPill>
          <svg width="8" height="8" viewBox="0 0 8 8"><circle cx="4" cy="4" r="3" fill="#a7b9d6" /><circle cx="3" cy="3" r="1.500" fill="#f3f7fd" /></svg>
          <FxButton aria-label="함수 삽입">f<small>x</small></FxButton>
        </FxPill>
        <FormulaInput aria-label="수식 입력줄" />
        <ExpandButton aria-label="수식 입력줄 확장"><DoubleDown /></ExpandButton>
      </FormulaBar>

      <SheetArea>
        <SheetView>
          <Grid>
            <colgroup>
              <HeadCol />
              {columns.map(c => <col key={c} />)}
              <TailCol />
            </colgroup>
            <thead>
              <tr>
                <Corner aria-label="모두 선택"><svg width="30" height="31" viewBox="0 0 30 31"><path d="M30 0v31H0z" fill="#e9f0f9" /></svg></Corner>
                {columns.map(c => <ColHead key={c} $on={c === 'L'}>{c}</ColHead>)}
                <ColHead aria-label="O" />
              </tr>
            </thead>
            <tbody>
              {rows.map(r => (
                <Row key={r} $tall={tallRows.includes(r)}>
                  <RowHead $on={r === 16}>{r < 17 ? r : ''}</RowHead>
                  {[...columns, 'O'].map(c => (
                    <Cell key={c} $grid={r > 13} $rule={r === 12} $active={r === 16 && c === 'L'} />
                  ))}
                </Row>
              ))}
            </tbody>
          </Grid>
          <Chart>
            {chartData.map(d => (
              <React.Fragment key={d.label}>
                <ChartLabel>{d.label}</ChartLabel>
                <ChartTrack>
                  <Bar style={{ width: `${(d.value / AXIS_MAX) * 100}%` }} />
                  <BarValue>{d.value.toFixed(1)}</BarValue>
                </ChartTrack>
              </React.Fragment>
            ))}
          </Chart>
        </SheetView>
        <VScroll>
          <SplitHandle />
          <ScrollArrow aria-label="위로"><Arrow dir="u" /></ScrollArrow>
          <VThumb><GripLines flat /></VThumb>
          <Track $grow={1} />
          <ScrollArrow aria-label="아래로"><Arrow dir="d" /></ScrollArrow>
        </VScroll>
      </SheetArea>

      <SheetBar>
        <SheetNav>
          <IconButton aria-label="첫 시트"><Arrow dir="l" bar /></IconButton>
          <IconButton aria-label="이전 시트"><Arrow dir="l" /></IconButton>
          <IconButton aria-label="다음 시트"><Arrow dir="r" /></IconButton>
          <IconButton aria-label="마지막 시트"><Arrow dir="r" bar /></IconButton>
        </SheetNav>
        <SheetTab>Sheet4</SheetTab>
        <NewSheetTab aria-label="워크시트 삽입"><NewSheetIcon /></NewSheetTab>
        <Track $grow={1} />
        <SplitHandle $vertical />
        <HScroll>
          <ScrollArrow aria-label="왼쪽으로"><Arrow dir="l" /></ScrollArrow>
          <Track $grow={132} />
          <HThumb><GripLines /></HThumb>
          <Track $grow={67} />
          <ScrollArrow aria-label="오른쪽으로"><Arrow dir="r" /></ScrollArrow>
        </HScroll>
        <SplitHandle $vertical />
        <BarEnd />
      </SheetBar>

      <Status>
        <span>준비</span>
        <ViewTools>
          <ViewButton $on aria-label="기본"><ViewIcon kind={0} /></ViewButton>
          <ViewButton aria-label="페이지 레이아웃"><ViewIcon kind={1} /></ViewButton>
          <ViewButton aria-label="페이지 나누기 미리 보기"><ViewIcon kind={2} /></ViewButton>
          <output>205%</output>
          <IconButton aria-label="축소"><RoundIcon /></IconButton>
          <ZoomRange type="range" aria-label="확대/축소" min={0} max={100} defaultValue={66} />
          <IconButton aria-label="확대"><RoundIcon plus /></IconButton>
        </ViewTools>
      </Status>

      <TaskBar>
        <Start><FlagIcon />시작</Start>
        <Grip />
        <QuickLaunch>
          <IconButton aria-label="메일"><MailIcon /></IconButton>
          <IconButton aria-label="곰"><OrangeIcon /></IconButton>
          <IconButton aria-label="Internet Explorer"><IeIcon /></IconButton>
          <IconButton aria-label="글꼴"><WfIcon /></IconButton>
        </QuickLaunch>
        <More>»</More>
        <Grip />
        <Tasks>
          {tasks.map(t => (
            <Task key={t.text} $on={t.on}>
              {t.icon}
              <span>{t.text}</span>
              {t.stack && <Caret color="#fff" />}
            </Task>
          ))}
        </Tasks>
        <Grip />
        <Ime aria-label="입력기">A</Ime>
        <Tray>
          <TrayToggle aria-label="숨기기"><BackIcon /></TrayToggle>
          {['case', 'block', 'note', 'v', 'x', 'a'].map(k => <TrayIcon key={k} kind={k} />)}
          <time>오후 4:18</time>
        </Tray>
      </TaskBar>
    </Window>
  );
}
